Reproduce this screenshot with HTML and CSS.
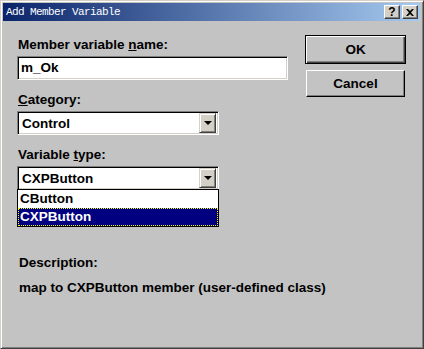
FILE: index.html
```html
<!DOCTYPE html>
<html lang="en">
<head>
    <meta charset="UTF-8">
    <title>Add Member Variable</title>
    <link rel="stylesheet" href="styles.css">
</head>
<body>
    <div class="window">
        <div class="titlebar">
            <span class="title">Add Member Variable</span>
            <div class="caption-btns">
                <span class="cap-btn">?</span>
                <span class="cap-btn close">
                    <svg width="8" height="7" viewBox="0 0 8 7"><path d="M0 0h2l2 2 2-2h2L5 3.5 8 7H6L4 5 2 7H0l3-3.5z" fill="#000"/></svg>
                </span>
            </div>
        </div>
        <div class="content">
            <div class="form">
                <div class="label">Member variable <u>n</u>ame:</div>
                <div class="field text-field">m_Ok</div>

                <div class="label"><u>C</u>ategory:</div>
                <div class="field combo">
                    <span class="combo-text">Control</span>
                    <span class="arrow-btn"><span class="arrow"></span></span>
                </div>

                <div class="label">Variable <u>t</u>ype:</div>
                <div class="combo-wrap">
                    <div class="field combo">
                        <span class="combo-text">CXPButton</span>
                        <span class="arrow-btn"><span class="arrow"></span></span>
                    </div>
                    <ul class="dropdown">
                        <li>CButton</li>
                        <li class="selected">CXPButton</li>
                    </ul>
                </div>
            </div>
            <div class="buttons">
                <button class="btn default">OK</button>
                <button class="btn">Cancel</button>
            </div>
        </div>
        <div class="description">
            <div class="label">Description:</div>
            <div class="desc-text">map to CXPButton member (user-defined class)</div>
        </div>
    </div>
</body>
</html>
```

FILE: styles.css
```css
body {
    margin: 0;
    padding: 0;
    background-color: #c0c0c0;
    font-family: "Liberation Sans", Arial, sans-serif;
}
.window {
    width: 424px;
    height: 349px;
    box-sizing: border-box;
    background-color: #c3c3c3;
    border-top: 1px solid #d4d0c8;
    border-left: 1px solid #d4d0c8;
    border-right: 1px solid #404040;
    border-bottom: 1px solid #404040;
    box-shadow: inset 1px 1px #fff, inset -1px -1px #808080;
    padding: 2px 3px 3px 2px;
    display: flex;
    flex-direction: column;
}
.titlebar {
    height: 18px;
    background: linear-gradient(to right, #0a246a, #a6caf0);
    display: flex;
    align-items: center;
    justify-content: space-between;
    padding: 0 2px 0 3px;
}
.title {
    color: #fff;
    font-family: "Liberation Mono", "DejaVu Sans Mono", monospace;
    font-size: 11px;
    letter-spacing: -0.6px;
}
.caption-btns {
    display: flex;
    gap: 2px;
}
.cap-btn {
    width: 16px;
    height: 14px;
    box-sizing: border-box;
    background-color: #d4d0c8;
    border-top: 1px solid #fff;
    border-left: 1px solid #fff;
    border-right: 1px solid #404040;
    border-bottom: 1px solid #404040;
    box-shadow: inset -1px -1px #808080;
    display: flex;
    align-items: center;
    justify-content: center;
    font-size: 12px;
    font-weight: bold;
    line-height: 1;
}
.content {
    display: flex;
    justify-content: space-between;
    padding: 14px 14px 0 14px;
}
.form {
    width: 271px;
    padding-top: 2px;
}
.label {
    font-size: 13.5px;
    font-weight: bold;
    color: #000;
    height: 16px;
    line-height: 16px;
    margin-left: 1px;
    margin-bottom: 3px;
}
.field {
    box-sizing: border-box;
    background-color: #fff;
    border-top: 1px solid #808080;
    border-left: 1px solid #808080;
    border-right: 1px solid #fff;
    border-bottom: 1px solid #fff;
    box-shadow: inset 1px 1px #000, inset -1px -1px #d4d0c8;
    font-size: 13.5px;
    font-weight: bold;
}
.text-field {
    width: 271px;
    height: 24px;
    padding: 3px 3px;
    line-height: 16px;
    margin-bottom: 12px;
}
.combo {
    width: 202px;
    height: 24px;
    display: flex;
    align-items: center;
    justify-content: space-between;
    padding: 2px;
    margin-bottom: 12px;
}
.combo-text {
    padding-left: 2px;
}
.arrow-btn {
    width: 17px;
    height: 20px;
    box-sizing: border-box;
    background-color: #d4d0c8;
    border-top: 1px solid #d4d0c8;
    border-left: 1px solid #d4d0c8;
    border-right: 1px solid #404040;
    border-bottom: 1px solid #404040;
    box-shadow: inset 1px 1px #fff, inset -1px -1px #808080;
    display: flex;
    align-items: center;
    justify-content: center;
}
.arrow {
    width: 0;
    height: 0;
    border-left: 4px solid transparent;
    border-right: 4px solid transparent;
    border-top: 4px solid #000;
}
.combo-wrap {
    position: relative;
}
.combo-wrap .combo {
    margin-bottom: 0;
}
.dropdown {
    position: absolute;
    left: 0;
    top: 23px;
    width: 202px;
    box-sizing: border-box;
    margin: 0;
    padding: 0;
    list-style: none;
    background-color: #fff;
    border: 1px solid #000;
    font-size: 13.5px;
    font-weight: bold;
}
.dropdown li {
    height: 18px;
    line-height: 18px;
    padding-left: 2px;
}
.dropdown .selected {
    background-color: #000080;
    color: #fff;
    outline: 1px dotted #ff0;
    outline-offset: -1px;
}
.buttons {
    display: flex;
    flex-direction: column;
    align-items: center;
    gap: 6px;
}
.btn {
    width: 99px;
    height: 27px;
    box-sizing: border-box;
    background-color: #c3c3c3;
    border-top: 1px solid #fff;
    border-left: 1px solid #fff;
    border-right: 1px solid #000;
    border-bottom: 1px solid #000;
    box-shadow: inset -1px -1px #808080;
    font-family: "Liberation Sans", Arial, sans-serif;
    font-size: 13.5px;
    font-weight: bold;
    padding: 0;
}
.btn.default {
    width: 101px;
    height: 29px;
    border: 1px solid #000;
    box-shadow: inset 1px 1px #fff, inset -1px -1px #404040, inset -2px -2px #808080;
}
.description {
    padding: 65px 0 0 15px;
}
.desc-text {
    font-size: 13.5px;
    font-weight: bold;
    line-height: 16px;
    margin-left: 1px;
    margin-top: 9px;
}
```
